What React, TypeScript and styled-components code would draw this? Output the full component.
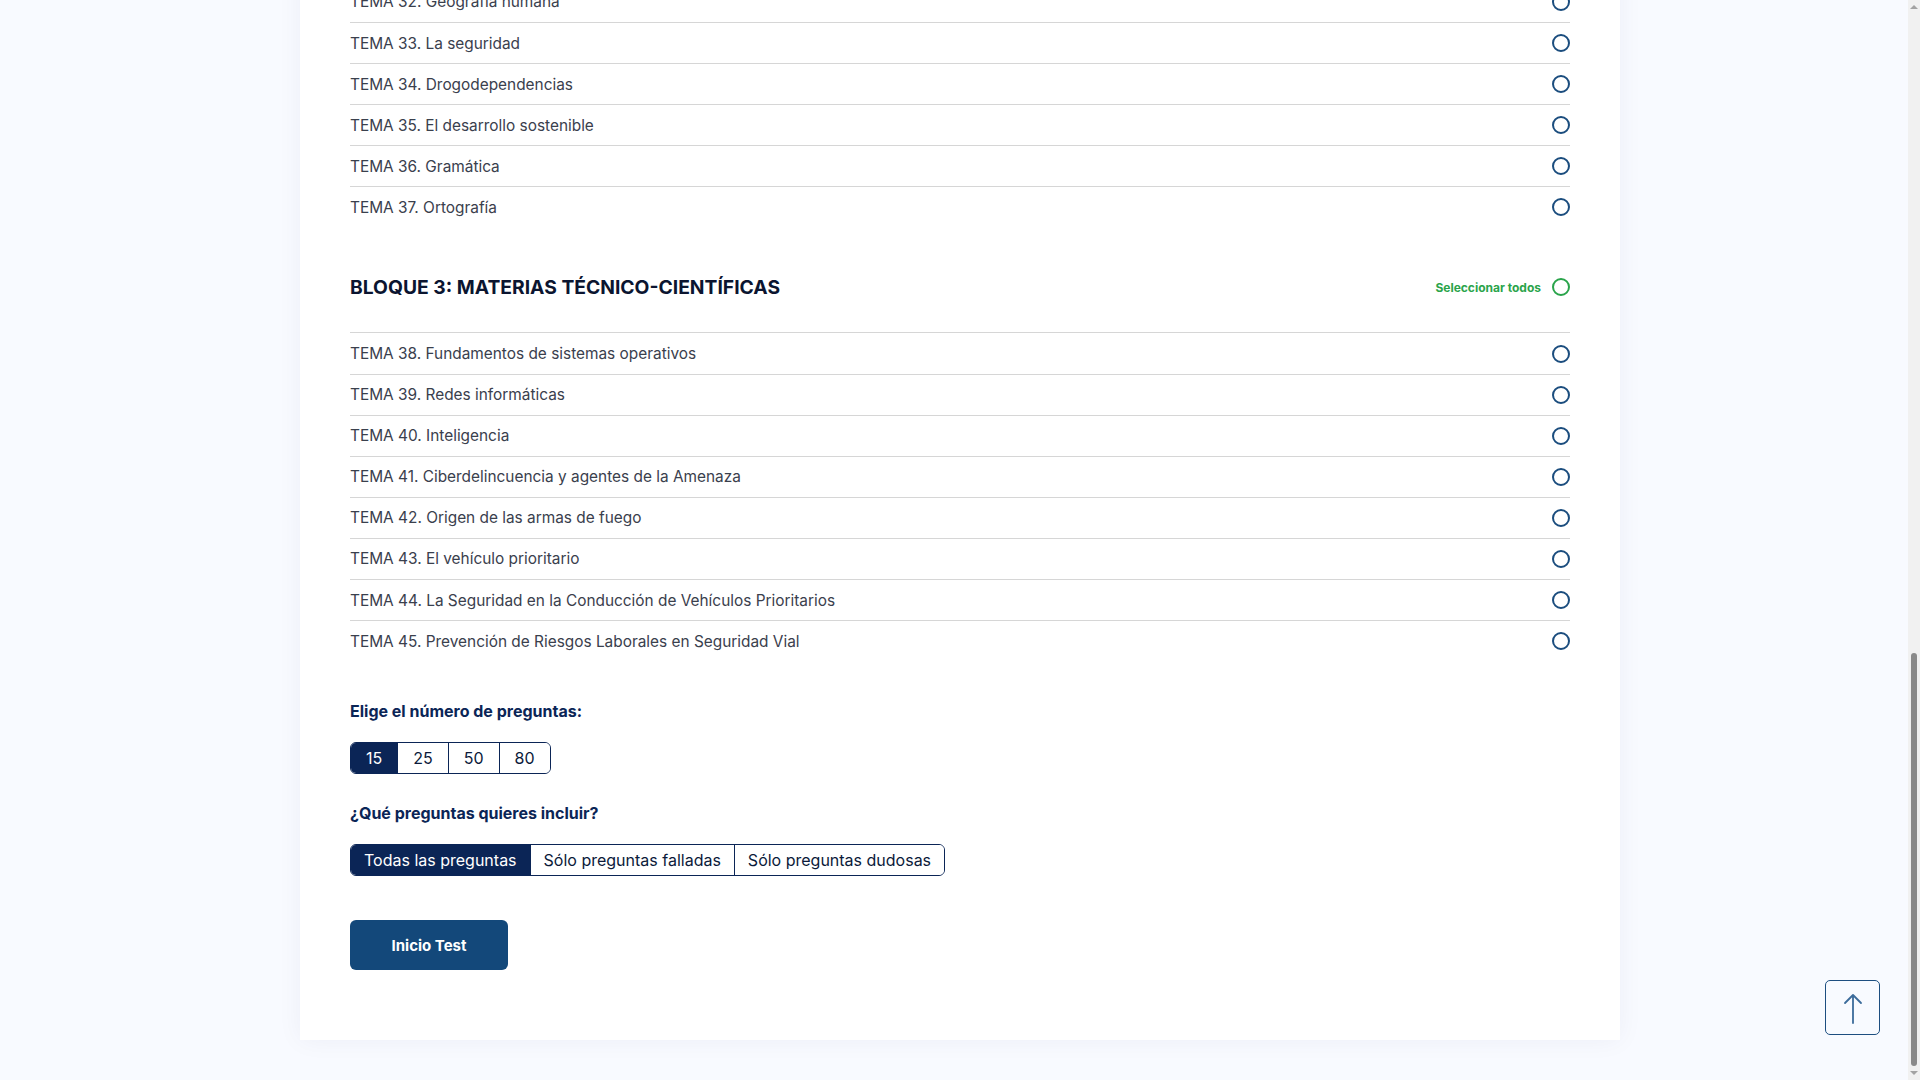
import React, { useLayoutEffect, useRef, useState } from 'react';
import styled, { createGlobalStyle } from 'styled-components';

const GlobalStyle = createGlobalStyle`
  html, body {
    margin: 0;
    padding: 0;
    background: #f8faff;
    font-family: 'Inter', 'Noto Sans', sans-serif;
    overflow: hidden;
  }
  * {
    box-sizing: border-box;
  }
`;

type Bloque = { title: string; topics: string[] };

const bloques: Bloque[] = [
  {
    title: 'BLOQUE 1: CIENCIAS JURÍDICAS',
    topics: [
      'Derechos Humanos',
      'Igualdad efectiva de mujeres y hombres',
      'Prevención de Riesgos Laborales',
      'Derecho Constitucional',
      'Derecho de la Unión Europea',
      'Instituciones Internacionales',
      'Derecho Civil',
      'Derecho Penal',
      'Derecho Procesal Penal',
      'Derecho Administrativo',
      'Protección de Datos',
      'Extranjería e Inmigración',
      'Seguridad Pública y Seguridad Privada',
      'Ministerio del Interior',
      'Fuerzas y Cuerpos de Seguridad',
      'Guardia Civil',
      'Protección Civil',
    ],
  },
  {
    title: 'BLOQUE 2: MATERIAS SOCIO-CULTURALES',
    topics: [
      'Desigualdad y exclusión social',
      'Globalización y antiglobalización',
      'Los movimientos migratorios',
      'Cultura de la seguridad',
      'Ecología',
      'La sociedad de la información',
      'Mediación y resolución de conflictos',
      'Terrorismo',
      'La violencia de género',
      'Comunicación',
      'Ciudadanía y civismo',
      'Actitudes y valores sociales',
      'Geografía física',
      'Geografía de España',
      'Geografía humana',
      'La seguridad',
      'Drogodependencias',
      'El desarrollo sostenible',
      'Gramática',
      'Ortografía',
    ],
  },
  {
    title: 'BLOQUE 3: MATERIAS TÉCNICO-CIENTÍFICAS',
    topics: [
      'Fundamentos de sistemas operativos',
      'Redes informáticas',
      'Inteligencia',
      'Ciberdelincuencia y agentes de la Amenaza',
      'Origen de las armas de fuego',
      'El vehículo prioritario',
      'La Seguridad en la Conducción de Vehículos Prioritarios',
      'Prevención de Riesgos Laborales en Seguridad Vial',
    ],
  },
];

const cantidades = [15, 25, 50, 80];
const tipos = ['Todas las preguntas', 'Sólo preguntas falladas', 'Sólo preguntas dudosas'];

const ARROW = 14;

function App() {
  const [cantidad, setCantidad] = useState(15);
  const [tipo, setTipo] = useState(tipos[0]);
  const [thumb, setThumb] = useState({ top: 647, height: 420 });
  const viewportRef = useRef<HTMLDivElement>(null);

  const updateThumb = () => {
    const el = viewportRef.current;
    if (!el) return;
    const track = el.clientHeight - ARROW * 2;
    const height = Math.max(30, (el.clientHeight / el.scrollHeight) * track);
    const max = el.scrollHeight - el.clientHeight;
    const top = ARROW + (max > 0 ? (el.scrollTop / max) * (track - height) : 0);
    setThumb({ top, height });
  };

  // la captura corresponde al final de la página
  useLayoutEffect(() => {
    const el = viewportRef.current;
    if (el) el.scrollTop = el.scrollHeight;
    updateThumb();
  }, []);

  const scrollUp = () => {
    viewportRef.current?.scrollTo({ top: 0, behavior: 'smooth' });
  };

  let numero = 0;

  return (
    <>
      <GlobalStyle />
      <Viewport ref={viewportRef} onScroll={updateThumb}>
        <Page>
          <Card>
            {bloques.map((bloque, i) => (
              <section key={bloque.title}>
                <BlockHeader first={i === 0}>
                  <BlockTitle>{bloque.title}</BlockTitle>
                  <SelectAll>
                    Seleccionar todos
                    <Radio color="#2aa44b" />
                  </SelectAll>
                </BlockHeader>
                <TopicList>
                  {bloque.topics.map((topic) => {
                    numero += 1;
                    return (
                      <TopicRow key={topic + numero}>
                        <TopicText>
                          TEMA {numero}. {topic}
                        </TopicText>
                        <Radio color="#1b4d7e" />
                      </TopicRow>
                    );
                  })}
                </TopicList>
              </section>
            ))}

            <OptionLabel>Elige el número de preguntas:</OptionLabel>
            <Segmented>
              {cantidades.map((n) => (
                <SegButton key={n} pad={15} active={n === cantidad} onClick={() => setCantidad(n)}>
                  {n}
                </SegButton>
              ))}
            </Segmented>

            <OptionLabel second>¿Qué preguntas quieres incluir?</OptionLabel>
            <Segmented>
              {tipos.map((t) => (
                <SegButton key={t} pad={13} active={t === tipo} onClick={() => setTipo(t)}>
                  {t}
                </SegButton>
              ))}
            </Segmented>

            <StartButton>Inicio Test</StartButton>
          </Card>
        </Page>
      </Viewport>

      <ScrollTop aria-label="Volver arriba" onClick={scrollUp}>
        <svg width="28" height="34" viewBox="0 0 28 34" fill="none">
          <path
            d="M14 32V4M6 12l8-8 8 8"
            stroke="#3b6b9b"
            strokeWidth="1.8"
            strokeLinecap="round"
            strokeLinejoin="round"
          />
        </svg>
      </ScrollTop>

      <ScrollTrack aria-hidden>
        <TrackArrow dir="up" />
        <ScrollThumb style={{ top: thumb.top, height: thumb.height }} />
        <TrackArrow dir="down" />
      </ScrollTrack>
    </>
  );
}

const Viewport = styled.div`
  height: 100vh;
  width: calc(100% - 12px);
  overflow-y: scroll;
  scrollbar-width: none;

  &::-webkit-scrollbar {
    display: none;
  }
`;

const Page = styled.div`
  padding: 110px 0 40px 300px;
`;

const Card = styled.main`
  width: 1320px;
  background: #ffffff;
  padding: 100px 50px 70px;
  box-shadow: 0 0 24px rgba(20, 40, 90, 0.05);
`;

const BlockHeader = styled.div<{ first?: boolean }>`
  display: flex;
  align-items: center;
  justify-content: space-between;
  height: 40px;
  margin: ${(p) => (p.first ? '0' : '40px')} 0 25px;
`;

const BlockTitle = styled.h2`
  margin: 0;
  font-size: 19.3px;
  font-weight: 700;
  color: #0b1530;
`;

const SelectAll = styled.button`
  display: flex;
  align-items: center;
  gap: 11px;
  border: 0;
  background: none;
  padding: 0;
  font-family: inherit;
  font-size: 12px;
  font-weight: 700;
  color: #2aa44b;
  cursor: pointer;
`;

const Radio = styled.span<{ color: string }>`
  display: inline-block;
  width: 18px;
  height: 18px;
  border-radius: 50%;
  border: 2px solid ${(p) => p.color};
  flex-shrink: 0;
`;

const TopicList = styled.div`
  display: flex;
  flex-direction: column;
`;

const TopicRow = styled.div`
  display: flex;
  align-items: center;
  justify-content: space-between;
  height: 41.1px;
  border-top: 1px solid #d6d6d6;
`;

const TopicText = styled.span`
  font-size: 15.4px;
  color: #3a404d;
`;

const OptionLabel = styled.h3<{ second?: boolean }>`
  margin: ${(p) => (p.second ? '29px' : '40px')} 0 21px;
  font-size: 16px;
  line-height: 20px;
  font-weight: 700;
  color: #0b2556;
`;

const Segmented = styled.div`
  display: inline-flex;
  height: 32px;
  border: 1px solid #0b2556;
  border-radius: 6px;
  overflow: hidden;
  vertical-align: top;
`;

const SegButton = styled.button<{ active?: boolean; pad: number }>`
  height: 100%;
  padding: 0 ${(p) => p.pad}px;
  border: 0;
  border-left: 1px solid #0b2556;
  background: ${(p) => (p.active ? '#0b2556' : '#ffffff')};
  color: ${(p) => (p.active ? '#ffffff' : '#0b1a3a')};
  font-family: inherit;
  font-size: 16px;
  cursor: pointer;

  &:first-child {
    border-left: 0;
  }
`;

const StartButton = styled.button`
  display: block;
  margin-top: 44px;
  width: 158px;
  height: 50px;
  border: 0;
  border-radius: 6px;
  background: #13487a;
  color: #ffffff;
  font-family: inherit;
  font-size: 15px;
  font-weight: 700;
  cursor: pointer;
`;

const ScrollTop = styled.button`
  position: fixed;
  right: 40px;
  bottom: 45px;
  width: 55px;
  height: 55px;
  display: flex;
  align-items: center;
  justify-content: center;
  background: transparent;
  border: 1.5px solid #1d4e80;
  border-radius: 5px;
  cursor: pointer;
`;

const ScrollTrack = styled.div`
  position: fixed;
  top: 0;
  right: 0;
  bottom: 0;
  width: 12px;
  background: #f1f1f1;
  display: flex;
  flex-direction: column;
  justify-content: space-between;
  align-items: center;
`;

const TrackArrow = styled.span<{ dir: 'up' | 'down' }>`
  margin: 5px 0;
  width: 0;
  height: 0;
  border-left: 4px solid transparent;
  border-right: 4px solid transparent;
  ${(p) =>
    p.dir === 'up'
      ? 'border-bottom: 4px solid #a3a3a3;'
      : 'border-top: 4px solid #a3a3a3;'}
`;

const ScrollThumb = styled.span`
  position: absolute;
  left: 3px;
  width: 6px;
  border-radius: 3px;
  background: #8a8a8a;
`;

export default App;
